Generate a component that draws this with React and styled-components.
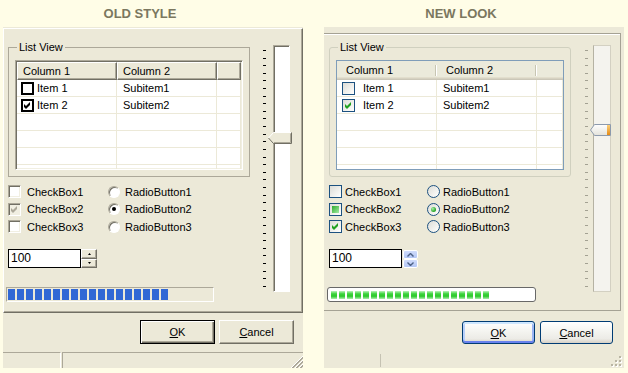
import React from "react";
import styled, { createGlobalStyle, css } from "styled-components";

const beige = "#ece9d8";
const shadow = "#aca899";
const dark = "#716f64";
const grid = "#ece9d8";

const GlobalStyle = createGlobalStyle`
  body {
    margin: 0;
    background: #fffde7;
    font-family: "Liberation Sans", Arial, sans-serif;
  }
`;

const Page = styled.div`
  display: flex;
  gap: 21px;
  padding-left: 3px;
`;

const Column = styled.div`
  width: 300px;
  display: flex;
  flex-direction: column;
`;

const Title = styled.div`
  height: 27px;
  line-height: 28px;
  padding-right: 26px;
  text-align: center;
  font-size: 13px;
  font-weight: bold;
  color: #7b775f;
`;

const Window = styled.div`
  height: 341px;
  background: ${beige};
  display: flex;
  flex-direction: column;
  font-size: 11px;
  color: #000;
`;

const Pane = styled.div`
  display: flex;
  box-sizing: border-box;
  ${({ $xp }) =>
    $xp
      ? css`
          width: 297px;
          height: 278px;
          margin-top: 6px;
          padding: 7px 0 0 5px;
          border: 1px solid #a5a294;
          border-left: none;
          box-shadow: inset 0 1px 0 #fff;
        `
      : css`
          width: 300px;
          height: 285px;
          margin-top: 1px;
          padding: 12px 0 0 4px;
          border: 1px solid;
          border-color: #fff ${dark} ${dark} #fff;
          box-shadow: inset -1px -1px 0 ${shadow};
        `}
`;

const Main = styled.div`
  width: 250px;
  display: flex;
  flex-direction: column;
`;

const Group = styled.fieldset`
  margin: 0;
  width: 242px;
  min-width: 0;
  box-sizing: border-box;
  padding: 6px;
  border: 1px solid ${({ $xp }) => ($xp ? "#d0d0bf" : shadow)};
  border-radius: ${({ $xp }) => ($xp ? 3 : 0)}px;
`;

const Legend = styled.legend`
  margin-left: 2px;
  padding: 0 2px;
  line-height: 13px;
`;

const ListFrame = styled.div`
  height: 110px;
  box-sizing: border-box;
  background: #fff;
  overflow: hidden;
  ${({ $xp }) =>
    $xp
      ? css`
          border: 1px solid #7f9db9;
        `
      : css`
          padding: 1px;
          border: 1px solid;
          border-color: ${shadow} #fff #fff ${shadow};
          box-shadow: inset 1px 1px 0 ${dark}, inset -1px -1px 0 #f1efe2;
        `}
`;

const HeaderRow = styled.div`
  display: grid;
  grid-template-columns: 100px 100px 1fr;
  height: ${({ $xp }) => ($xp ? 19 : 18)}px;
`;

const HeaderCell = styled.div`
  box-sizing: border-box;
  white-space: nowrap;
  overflow: hidden;
  ${({ $xp, $last }) =>
    $xp
      ? css`
          padding-left: 9px;
          line-height: 18px;
          background: ${$last
              ? ""
              : "linear-gradient(#c7c5b2, #c7c5b2) no-repeat calc(100% - 1px) 4px / 1px 11px, linear-gradient(#fff, #fff) no-repeat 100% 4px / 1px 11px,"}
            linear-gradient(
              to bottom,
              #ebeadb 16px,
              #e2decd 16px,
              #e2decd 17px,
              #d6d2c2 17px,
              #d6d2c2 18px,
              #cbc7b8 18px
            );
        `
      : css`
          padding-left: 5px;
          line-height: 16px;
          background: ${beige};
          border: 1px solid;
          border-color: #fff ${dark} ${dark} #fff;
          box-shadow: inset -1px -1px 0 ${shadow};
        `}
`;

const Row = styled.div`
  display: grid;
  grid-template-columns: 100px 100px 1fr;
  height: 17px;
`;

const Cell = styled.div`
  box-sizing: border-box;
  display: flex;
  align-items: center;
  gap: ${({ $xp }) => ($xp ? 8 : 3)}px;
  padding-left: ${({ $first, $xp }) => ($first ? ($xp ? 5 : 4) : 6)}px;
  border-right: 1px solid ${grid};
  border-bottom: 1px solid ${grid};
  white-space: nowrap;
  overflow: hidden;
`;

const ItemBox = styled.span`
  flex: none;
  width: 13px;
  height: 13px;
  box-sizing: border-box;
  display: flex;
  align-items: center;
  justify-content: center;
  ${({ $xp }) =>
    $xp
      ? css`
          border: 1px solid #1c5180;
          background: linear-gradient(135deg, #dcdcd7, #f7f7f4 75%, #fff);
        `
      : css`
          border: 2px solid #000;
          background: #fff;
        `}
`;

const Options = styled.div`
  display: grid;
  grid-template-columns: ${({ $xp }) => ($xp ? 98 : 100)}px 1fr;
  grid-template-rows: repeat(3, 17.5px);
  grid-auto-flow: column;
  margin-top: 6px;
`;

const Option = styled.label`
  display: flex;
  align-items: center;
  gap: ${({ $gap }) => $gap}px;
  white-space: nowrap;
`;

const Box = styled.span`
  flex: none;
  width: 13px;
  height: 13px;
  box-sizing: border-box;
  display: flex;
  align-items: center;
  justify-content: center;
  ${({ $xp, $grayed }) =>
    $xp
      ? css`
          border: 1px solid #1c5180;
          background: linear-gradient(135deg, #dcdcd7, #f7f7f4 75%, #fff);
        `
      : css`
          border: 1px solid;
          border-color: ${shadow} #fff #fff ${shadow};
          box-shadow: inset 1px 1px 0 ${dark}, inset -1px -1px 0 #f1efe2;
          background: ${$grayed ? "#f1efe2" : "#fff"};
        `}
`;

const Mixed = styled.span`
  width: 7px;
  height: 7px;
  background: linear-gradient(135deg, #2fa82f, #73d273 60%, #a8e8a8);
`;

const Radio = styled.span`
  flex: none;
  border-radius: 50%;
  box-sizing: border-box;
  display: flex;
  align-items: center;
  justify-content: center;
  ${({ $xp }) =>
    $xp
      ? css`
          width: 13px;
          height: 13px;
          border: 1px solid #1c5180;
          background: linear-gradient(135deg, #dcdcd7, #f7f7f4 75%, #fff);
        `
      : css`
          width: 12px;
          height: 12px;
          border: 1px solid;
          border-color: ${shadow} #fff #fff ${shadow};
          box-shadow: inset 1px 1px 0 ${dark};
          background: #fff;
        `}
`;

const Dot = styled.span`
  border-radius: 50%;
  ${({ $xp }) =>
    $xp
      ? css`
          width: 5px;
          height: 5px;
          background: radial-gradient(circle at 35% 35%, #a8f0a8, #21a121 70%);
        `
      : css`
          width: 4px;
          height: 4px;
          background: #000;
        `}
`;

const SpinRow = styled.div`
  display: flex;
  height: 19px;
  margin-top: 13.5px;
`;

const SpinInput = styled.div`
  width: 73px;
  box-sizing: border-box;
  border: 1px solid #000;
  background: #fff;
  padding-left: 2px;
  line-height: 17px;
  font-size: 12px;
`;

const SpinButtons = styled.div`
  display: flex;
  flex-direction: column;
  width: ${({ $xp }) => ($xp ? 15 : 16)}px;
  margin-left: ${({ $xp }) => ($xp ? 1 : 0)}px;
  height: ${({ $xp }) => ($xp ? 18 : 19)}px;
  margin-top: ${({ $xp }) => ($xp ? 1 : 0)}px;
`;

const SpinButton = styled.div`
  flex: 1;
  box-sizing: border-box;
  display: flex;
  align-items: center;
  justify-content: center;
  ${({ $xp }) =>
    $xp
      ? css`
          border: 1px solid #fff;
          border-radius: 2px;
          background: linear-gradient(#d0dcfb, #b4c7f6);
        `
      : css`
          background: ${beige};
          border: 1px solid;
          border-color: #fff ${dark} ${dark} #fff;
          box-shadow: inset -1px -1px 0 ${shadow};
        `}
`;

const Progress = styled.div`
  display: flex;
  box-sizing: border-box;
  margin-top: 19px;
  margin-left: -2px;
  height: 15px;
  ${({ $xp }) =>
    $xp
      ? css`
          width: 209px;
          gap: 2px;
          padding: 2px 3px;
          border: 1px solid #686868;
          border-radius: 3px;
          background: #fff;
          align-items: center;
        `
      : css`
          width: 208px;
          gap: 2px;
          padding: 1px;
          border: 1px solid;
          border-color: ${shadow} #fff #fff ${shadow};
        `}
`;

const Block = styled.span`
  flex: none;
  ${({ $xp }) =>
    $xp
      ? css`
          width: 6px;
          height: 8px;
          background: linear-gradient(#bdf2bd, #3ed43e 35%, #2bc92b 65%, #aeeeae);
        `
      : css`
          width: 7px;
          height: 11px;
          background: #3168d5;
        `}
`;

const SliderCol = styled.div`
  display: flex;
  align-items: flex-start;
  padding-left: ${({ $xp }) => ($xp ? 6 : 5)}px;
  gap: ${({ $xp }) => ($xp ? 5 : 7)}px;
`;

const Ticks = styled.div`
  margin-top: 9px;
  height: 237px;
  display: flex;
  flex-direction: column;
  justify-content: space-between;
`;

const Tick = styled.span`
  width: 3px;
  height: 1px;
  background: ${({ $xp }) => ($xp ? "#a3a192" : "#000")};
`;

const Track = styled.div`
  position: relative;
  margin-top: 4px;
  height: 247px;
  box-sizing: border-box;
  ${({ $xp }) =>
    $xp
      ? css`
          width: 18px;
          background: #f4f3ee;
          border: 1px solid #d3d0c2;
          border-left-color: #b5b2a3;
        `
      : css`
          width: 17px;
          background: #fff;
          border: 1px solid;
          border-color: ${shadow} #fff #fff ${shadow};
          box-shadow: inset 1px 1px 0 ${dark};
        `}
`;

const Thumb = styled.svg`
  position: absolute;
  display: block;
  left: ${({ $xp }) => ($xp ? -4 : -6)}px;
  top: ${({ $xp }) => ($xp ? 78 : 86)}px;
`;

const ButtonRow = styled.div`
  display: flex;
  justify-content: flex-end;
  ${({ $xp }) =>
    $xp
      ? css`
          margin-top: 10px;
          gap: 5px;
          padding-right: 11px;
        `
      : css`
          margin-top: 7px;
          gap: 4px;
          padding-right: 9px;
        `}
`;

const Button = styled.button`
  width: ${({ $xp }) => ($xp ? 73 : 75)}px;
  height: ${({ $xp }) => ($xp ? 23 : 24)}px;
  box-sizing: border-box;
  padding: 0;
  font: inherit;
  color: #000;
  ${({ $xp, $default }) =>
    $xp
      ? css`
          border: 1px solid #003c74;
          border-radius: 3px;
          background: linear-gradient(#fff, #f4f4f0 45%, #ecebe6 80%, #d6d0c5);
          ${$default &&
          css`
            box-shadow: inset 0 2px 0 #cee7ff, inset 0 -2px 0 #6982ee,
              inset 2px 0 0 #b7cffa, inset -2px 0 0 #9ab4f3;
          `}
        `
      : $default
      ? css`
          background: ${beige};
          border: 1px solid #000;
          box-shadow: inset 1px 1px 0 #fff, inset -1px -1px 0 ${dark},
            inset -2px -2px 0 ${shadow};
        `
      : css`
          background: ${beige};
          border: 1px solid;
          border-color: #fff ${dark} ${dark} #fff;
          box-shadow: inset -1px -1px 0 ${shadow};
        `}
`;

const StatusBar = styled.div`
  margin-top: auto;
  height: 16px;
  display: flex;
  ${({ $xp }) => !$xp && css`gap: 1px;`}
`;

const StatusPanel = styled.div`
  box-sizing: border-box;
  display: flex;
  justify-content: flex-end;
  align-items: flex-end;
  ${({ $xp, $grow }) =>
    $xp
      ? css`
          flex: ${$grow ? 1 : "none"};
          width: ${$grow ? "auto" : "57px"};
          padding: 2px 2px 1px 0;
          ${!$grow && css`border-right: 1px solid #c5c2b2; margin: 2px 0 1px;`}
        `
      : css`
          flex: ${$grow ? 1 : "none"};
          width: ${$grow ? "auto" : "58px"};
          border-top: 1px solid ${shadow};
          ${$grow
            ? css`border-left: 1px solid ${shadow};`
            : css`border-right: 1px solid #fff;`}
        `}
`;

const Underline = styled.span`
  text-decoration: underline;
`;

const CheckMark = ({ color }) => (
  <svg width="7" height="7" viewBox="0 0 7 7">
    <polygon points="0,2 2,4 6,0 6,3 2,7 0,5" fill={color} />
  </svg>
);

const Arrow = ({ up, xp }) =>
  xp ? (
    <svg width="7" height="4" viewBox="0 0 7 4">
      <polyline
        points={up ? "0.5,3.5 3.5,0.5 6.5,3.5" : "0.5,0.5 3.5,3.5 6.5,0.5"}
        fill="none"
        stroke="#4d6185"
        strokeWidth="1.4"
      />
    </svg>
  ) : (
    <svg width="3" height="2" viewBox="0 0 3 2">
      <polygon points={up ? "1.5,0 3,2 0,2" : "0,0 3,0 1.5,2"} fill="#000" />
    </svg>
  );

const ClassicThumb = () => (
  <Thumb width="24" height="12" viewBox="0 0 24 12">
    <polygon points="5.5,0.5 23.5,0.5 23.5,11.5 5.5,11.5 0.5,6" fill={beige} />
    <polyline points="0.5,6 5.5,0.5 23,0.5" fill="none" stroke="#fff" />
    <polyline points="23.5,0.5 23.5,11.5 5.5,11.5 0.5,6" fill="none" stroke={dark} />
    <polyline points="22.5,1.5 22.5,10.5 6,10.5" fill="none" stroke={shadow} />
  </Thumb>
);

const XpThumb = () => (
  <Thumb $xp width="21" height="12" viewBox="0 0 21 12">
    <defs>
      <linearGradient id="xpthumb" x1="0" y1="0" x2="0" y2="1">
        <stop offset="0" stopColor="#ffffff" />
        <stop offset="1" stopColor="#e3e2da" />
      </linearGradient>
      <linearGradient id="xporange" x1="0" y1="0" x2="0" y2="1">
        <stop offset="0" stopColor="#fcd07a" />
        <stop offset="1" stopColor="#e58a15" />
      </linearGradient>
    </defs>
    <polygon
      points="4.5,0.5 20.5,0.5 20.5,11.5 4.5,11.5 0.5,6"
      fill="url(#xpthumb)"
      stroke="#8c9aad"
    />
    <rect x="17" y="1" width="3" height="10" fill="url(#xporange)" />
  </Thumb>
);

const ClassicGrip = () => (
  <svg width="12" height="12" viewBox="0 0 12 12" shapeRendering="crispEdges">
    {[0, 4, 8].map((o) => (
      <g key={o}>
        <line x1={o} y1="12" x2="12" y2={o} stroke="#fff" />
        <line x1={o + 1} y1="12" x2="12" y2={o + 1} stroke={shadow} />
        <line x1={o + 2} y1="12" x2="12" y2={o + 2} stroke={shadow} />
      </g>
    ))}
  </svg>
);

const XpGrip = () => {
  const dots = [
    [8, 0],
    [8, 4],
    [4, 4],
    [8, 8],
    [4, 8],
    [0, 8],
  ];
  return (
    <svg width="11" height="11" viewBox="0 0 11 11">
      {dots.map(([x, y]) => (
        <g key={`${x}-${y}`}>
          <rect x={x + 1} y={y + 1} width="2" height="2" fill="#fff" />
          <rect x={x} y={y} width="2" height="2" fill="#b9b5a3" />
        </g>
      ))}
    </svg>
  );
};

const items = [
  { name: "Item 1", sub: "Subitem1", checked: false },
  { name: "Item 2", sub: "Subitem2", checked: true },
];

const ticks = Array.from({ length: 32 });

const Dialog = ({ xp }) => {
  const checks = xp
    ? ["none", "mixed", "checked"]
    : ["none", "grayed", "none"];
  const checkColor = xp ? "#21a121" : "#000";

  return (
    <Window>
      <Pane $xp={xp}>
        <Main>
          <Group $xp={xp}>
            <Legend>List View</Legend>
            <ListFrame $xp={xp}>
              <HeaderRow $xp={xp}>
                <HeaderCell $xp={xp}>Column 1</HeaderCell>
                <HeaderCell $xp={xp}>Column 2</HeaderCell>
                <HeaderCell $xp={xp} $last />
              </HeaderRow>
              {items.map((item) => (
                <Row key={item.name}>
                  <Cell $xp={xp} $first>
                    <ItemBox $xp={xp}>
                      {item.checked && <CheckMark color={checkColor} />}
                    </ItemBox>
                    {item.name}
                  </Cell>
                  <Cell $xp={xp}>{item.sub}</Cell>
                  <Cell $xp={xp} />
                </Row>
              ))}
              {[0, 1, 2, 3].map((i) => (
                <Row key={i}>
                  <Cell $xp={xp} />
                  <Cell $xp={xp} />
                  <Cell $xp={xp} />
                </Row>
              ))}
            </ListFrame>
          </Group>

          <Options $xp={xp}>
            {checks.map((state, i) => (
              <Option key={`c${i}`} $gap={xp ? 3 : 6}>
                <Box $xp={xp} $grayed={state === "grayed"}>
                  {state === "checked" && <CheckMark color={checkColor} />}
                  {state === "grayed" && <CheckMark color={shadow} />}
                  {state === "mixed" && <Mixed />}
                </Box>
                CheckBox{i + 1}
              </Option>
            ))}
            {[1, 2, 3].map((n) => (
              <Option key={`r${n}`} $gap={xp ? 3 : 5}>
                <Radio $xp={xp}>{n === 2 && <Dot $xp={xp} />}</Radio>
                RadioButton{n}
              </Option>
            ))}
          </Options>

          <SpinRow>
            <SpinInput>100</SpinInput>
            <SpinButtons $xp={xp}>
              <SpinButton $xp={xp}>
                <Arrow up xp={xp} />
              </SpinButton>
              <SpinButton $xp={xp}>
                <Arrow xp={xp} />
              </SpinButton>
            </SpinButtons>
          </SpinRow>

          <Progress $xp={xp}>
            {Array.from({ length: xp ? 20 : 18 }).map((_, i) => (
              <Block key={i} $xp={xp} />
            ))}
          </Progress>
        </Main>

        <SliderCol $xp={xp}>
          <Ticks>
            {ticks.map((_, i) => (
              <Tick key={i} $xp={xp} />
            ))}
          </Ticks>
          <Track $xp={xp}>{xp ? <XpThumb /> : <ClassicThumb />}</Track>
        </SliderCol>
      </Pane>

      <ButtonRow $xp={xp}>
        <Button $xp={xp} $default>
          <Underline>O</Underline>K
        </Button>
        <Button $xp={xp}>
          <Underline>C</Underline>ancel
        </Button>
      </ButtonRow>

      <StatusBar $xp={xp}>
        <StatusPanel $xp={xp} />
        <StatusPanel $xp={xp} $grow>
          {xp ? <XpGrip /> : <ClassicGrip />}
        </StatusPanel>
      </StatusBar>
    </Window>
  );
};

export default function App() {
  return (
    <>
      <GlobalStyle />
      <Page>
        <Column>
          <Title>OLD STYLE</Title>
          <Dialog />
        </Column>
        <Column>
          <Title>NEW LOOK</Title>
          <Dialog xp />
        </Column>
      </Page>
    </>
  );
}
